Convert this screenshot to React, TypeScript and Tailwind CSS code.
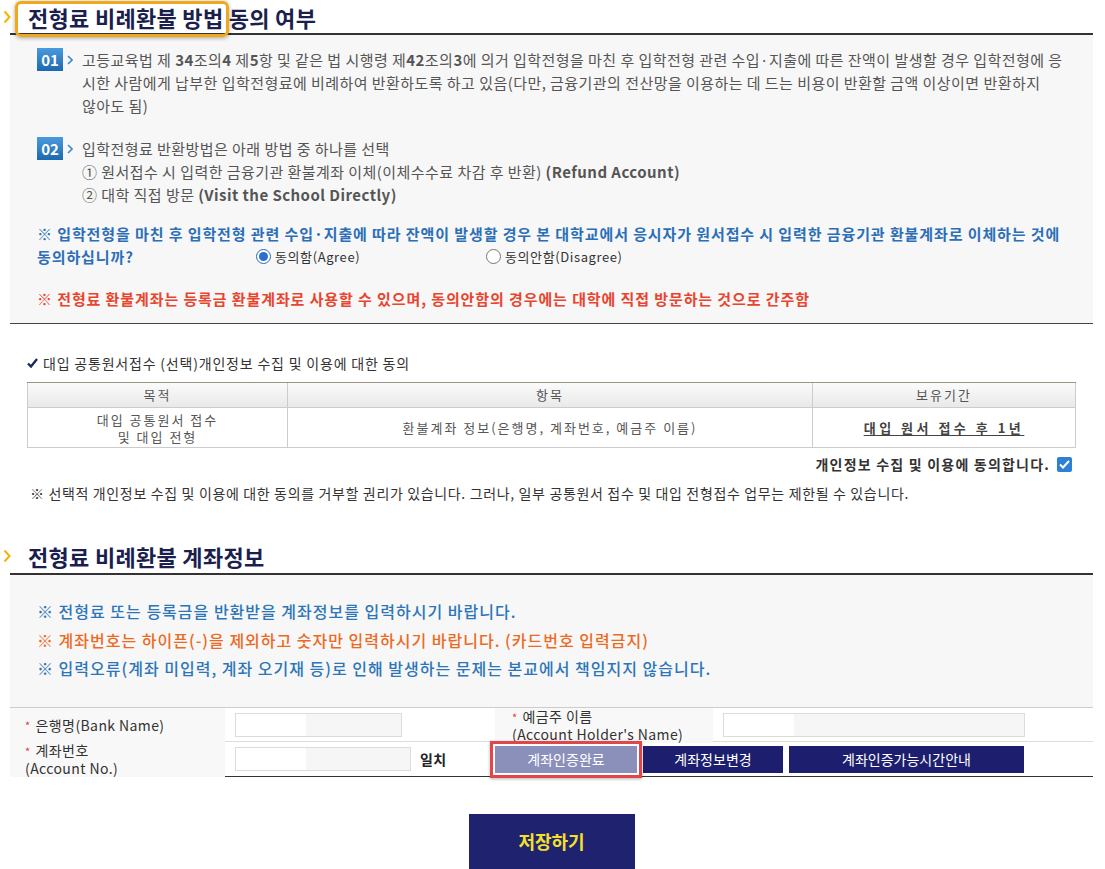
import React from "react";

const font = "font-['Noto_Sans_CJK_KR','Noto_Sans',sans-serif]";

function Chevron({ top }: { top: string }) {
  return (
    <svg width="8" height="14" viewBox="0 0 8 14" className={`absolute left-[-7px] ${top}`}>
      <polyline points="1.5,1.5 6.5,7 1.5,12.5" fill="none" stroke="#f5b400" strokeWidth="2" />
    </svg>
  );
}

function Badge({ num }: { num: string }) {
  return (
    <div className="flex shrink-0 items-start">
      <span className="flex h-[23px] w-[26px] items-center justify-center bg-gradient-to-b from-[#4a9ade] to-[#1d69b0] text-[15px] font-bold leading-none text-white">
        {num}
      </span>
      <svg width="6" height="10" viewBox="0 0 6 10" className="ml-[4px] mt-[7px]">
        <polyline points="1,1 5,5 1,9" fill="none" stroke="#3b8bd0" strokeWidth="1.6" />
      </svg>
    </div>
  );
}

function Radio({ checked }: { checked?: boolean }) {
  return checked ? (
    <span className="flex h-[15px] w-[15px] items-center justify-center rounded-full border border-[#2b66c4] bg-white">
      <span className="h-[9px] w-[9px] rounded-full bg-[#2b6fd3]" />
    </span>
  ) : (
    <span className="h-[15px] w-[15px] rounded-full border border-[#777] bg-white" />
  );
}

function Req() {
  return <span className="mr-[5px] text-[11px] text-[#e03a3a]">*</span>;
}

function MaskedInput({ w }: { w: string }) {
  return (
    <div className={`flex h-[24px] ${w} border border-[#dcdcdc] bg-[#f6f6f6]`}>
      <div className="h-full w-[70px] bg-white" />
    </div>
  );
}

export default function App() {
  return (
    <div className={`${font} min-h-[869px] bg-white pl-[10px] pr-[12px] text-[#555]`}>
      {/* 전형료 비례환불 방법 동의 여부 */}
      <div className="relative h-[35px] border-b-2 border-[#333]">
        <Chevron top="top-[10px]" />
        <h2 className="pl-[18px] pt-[3px] text-[22px] font-bold leading-[28px] tracking-[0.3px] text-[#1b1f4e]">
          전형료 비례환불 방법 동의 여부
        </h2>
        <div className="pointer-events-none absolute left-[5px] top-[1px] h-[36px] w-[214px] rounded-[6px] border-[3px] border-[#f2a81d] shadow-[0_1px_4px_rgba(0,0,0,0.35)]" />
      </div>

      <div className="border-b border-[#444] bg-[#f7f7f7] pb-[13px] pl-[27px] pr-[12px] pt-[13px] text-[15px] leading-[23px]">
        <div className="flex">
          <Badge num="01" />
          <p className="ml-[9px] tracking-[0.45px]">
            고등교육법 제 <b>34</b>조의<b>4</b> 제<b>5</b>항 및 같은 법 시행령 제<b>42</b>조의<b>3</b>에 의거 입학전형을 마친 후 입학전형 관련 수입·지출에 따른 잔액이 발생할 경우 입학전형에 응
            <br />
            시한 사람에게 납부한 입학전형료에 비례하여 반환하도록 하고 있음(다만, 금융기관의 전산망을 이용하는 데 드는 비용이 반환할 금액 이상이면 반환하지
            <br />
            않아도 됨)
          </p>
        </div>

        <div className="mt-[20px] flex">
          <Badge num="02" />
          <p className="ml-[9px] tracking-[0.45px]">
            입학전형료 반환방법은 아래 방법 중 하나를 선택
            <br />
            ① 원서접수 시 입력한 금융기관 환불계좌 이체(이체수수료 차감 후 반환) <b>(Refund Account)</b>
            <br />
            ② 대학 직접 방문 <b>(Visit the School Directly)</b>
          </p>
        </div>

        <div className="mt-[16px] font-bold text-[#2c6fb7]">
          <p className="tracking-[0.9px]">
            ※ 입학전형을 마친 후 입학전형 관련 수입·지출에 따라 잔액이 발생할 경우 본 대학교에서 응시자가 원서접수 시 입력한 금융기관 환불계좌로 이체하는 것에
          </p>
          <div className="flex items-center">
            <span className="w-[219px] tracking-[0.9px]">동의하십니까?</span>
            <label className="flex w-[230px] items-center gap-[4px] text-[13px] font-normal tracking-[0.6px] text-[#333]">
              <Radio checked />
              동의함(Agree)
            </label>
            <label className="flex items-center gap-[4px] text-[13px] font-normal tracking-[0.6px] text-[#333]">
              <Radio />
              동의안함(Disagree)
            </label>
          </div>
        </div>

        <p className="mt-[19px] font-bold tracking-[0.9px] text-[#e8452f]">
          ※ 전형료 환불계좌는 등록금 환불계좌로 사용할 수 있으며, 동의안함의 경우에는 대학에 직접 방문하는 것으로 간주함
        </p>
      </div>

      {/* 개인정보 수집 및 이용 동의 */}
      <div className="mt-[30px] flex items-center gap-[5px] pl-[17px] text-[14px] leading-[18px] tracking-[0.8px] text-[#333]">
        <svg width="11" height="10" viewBox="0 0 11 10">
          <path d="M1 5.5 L4 8.5 L10 1" fill="none" stroke="#1b2a5c" strokeWidth="2.4" />
        </svg>
        대입 공통원서접수 (선택)개인정보 수집 및 이용에 대한 동의
      </div>

      <div className="mx-[17px] mt-[10px] border-t border-[#9b9585] text-[13px] tracking-[2px] text-[#555]">
        <div className="grid h-[25px] grid-cols-[261px_525px_1fr] border-b border-[#ccc] bg-gradient-to-b from-[#fbfbfb] to-[#e9e9e9]">
          <div className="flex items-center justify-center border-l border-r border-[#ccc]">목적</div>
          <div className="flex items-center justify-center border-r border-[#ccc]">항목</div>
          <div className="flex items-center justify-center border-r border-[#ccc]">보유기간</div>
        </div>
        <div className="grid h-[40px] grid-cols-[261px_525px_1fr] border-b border-[#ccc] bg-white">
          <div className="flex flex-col items-center justify-center border-l border-r border-[#ccc] leading-[17px]">
            <span>대입 공통원서 접수</span>
            <span>및 대입 전형</span>
          </div>
          <div className="flex items-center justify-center border-r border-[#ccc]">
            환불계좌 정보(은행명, 계좌번호, 예금주 이름)
          </div>
          <div className="flex items-center justify-center border-r border-[#ccc] font-semibold tracking-[3.5px] text-[#444] underline underline-offset-2">
            대입 원서 접수 후 1년
          </div>
        </div>
      </div>

      <div className="mt-[8px] flex items-center justify-end gap-[7px] pr-[21px] text-[14px] font-semibold leading-[16px] tracking-[1.2px] text-[#333]">
        개인정보 수집 및 이용에 동의합니다.
        <span className="flex h-[15px] w-[15px] items-center justify-center rounded-[2px] bg-[#2e7fd6]">
          <svg width="11" height="9" viewBox="0 0 11 9">
            <path d="M1 4.5 L4 7.5 L10 1" fill="none" stroke="white" strokeWidth="2" />
          </svg>
        </span>
      </div>

      <p className="mt-[12px] pl-[20px] text-[14px] leading-[18px] tracking-[0.65px] text-[#333]">
        ※ 선택적 개인정보 수집 및 이용에 대한 동의를 거부할 권리가 있습니다. 그러나, 일부 공통원서 접수 및 대입 전형접수 업무는 제한될 수 있습니다.
      </p>

      {/* 전형료 비례환불 계좌정보 */}
      <div className="relative mt-[37px] h-[36px] border-b-2 border-[#333]">
        <Chevron top="top-[10px]" />
        <h2 className="pl-[18px] pt-[4px] text-[22px] font-bold leading-[26px] tracking-[0.3px] text-[#1b1f4e]">
          전형료 비례환불 계좌정보
        </h2>
      </div>

      <div className="bg-[#f7f7f7] pb-[24px] pl-[27px] pt-[22px] text-[16px] font-medium leading-[28.5px] tracking-[1px]">
        <p className="text-[#2c76b8]">※ 전형료 또는 등록금을 반환받을 계좌정보를 입력하시기 바랍니다.</p>
        <p className="text-[#ec6a1f]">※ 계좌번호는 하이픈(-)을 제외하고 숫자만 입력하시기 바랍니다. (카드번호 입력금지)</p>
        <p className="text-[#2c76b8]">※ 입력오류(계좌 미입력, 계좌 오기재 등)로 인해 발생하는 문제는 본교에서 책임지지 않습니다.</p>
      </div>

      <div className="border-b border-t border-[#333] border-t-[#ccc] text-[14px] tracking-[0.4px] text-[#333]">
        <div className="grid h-[34px] grid-cols-[215px_270px_218px_1fr] border-b border-[#ddd]">
          <div className="flex items-center bg-[#f8f8f8] pl-[15px]">
            <Req />
            은행명(Bank Name)
          </div>
          <div className="flex items-center pl-[10px]">
            <MaskedInput w="w-[167px]" />
          </div>
          <div className="flex flex-col justify-center bg-[#f8f8f8] pl-[17px] leading-[17px]">
            <span>
              <Req />
              예금주 이름
            </span>
            <span>(Account Holder's Name)</span>
          </div>
          <div className="flex items-center pl-[10px]">
            <MaskedInput w="w-[302px]" />
          </div>
        </div>
        <div className="grid h-[34px] grid-cols-[215px_270px_1fr]">
          <div className="flex flex-col justify-center bg-[#f8f8f8] pl-[15px] leading-[17px]">
            <span>
              <Req />
              계좌번호
            </span>
            <span>(Account No.)</span>
          </div>
          <div className="flex items-center pl-[10px]">
            <MaskedInput w="w-[176px]" />
            <span className="ml-[9px] font-bold text-[#222]">일치</span>
          </div>
          <div className="flex items-center gap-[6px] tracking-normal text-white">
            <div className="relative">
              <button className="h-[27px] w-[142px] bg-[#8b90bb]">계좌인증완료</button>
              <div className="pointer-events-none absolute -inset-[5px] border-[3px] border-[#e2454a] shadow-[0_1px_3px_rgba(0,0,0,0.3)]" />
            </div>
            <button className="h-[27px] w-[140px] bg-[#1d1f6e]">계좌정보변경</button>
            <button className="h-[27px] w-[235px] bg-[#1d1f6e]">계좌인증가능시간안내</button>
          </div>
        </div>
      </div>

      <div className="mt-[37px] flex justify-center">
        <button className="h-[56px] w-[166px] bg-[#1f236f] text-[18px] font-bold text-[#f4e02c]">저장하기</button>
      </div>
    </div>
  );
}
